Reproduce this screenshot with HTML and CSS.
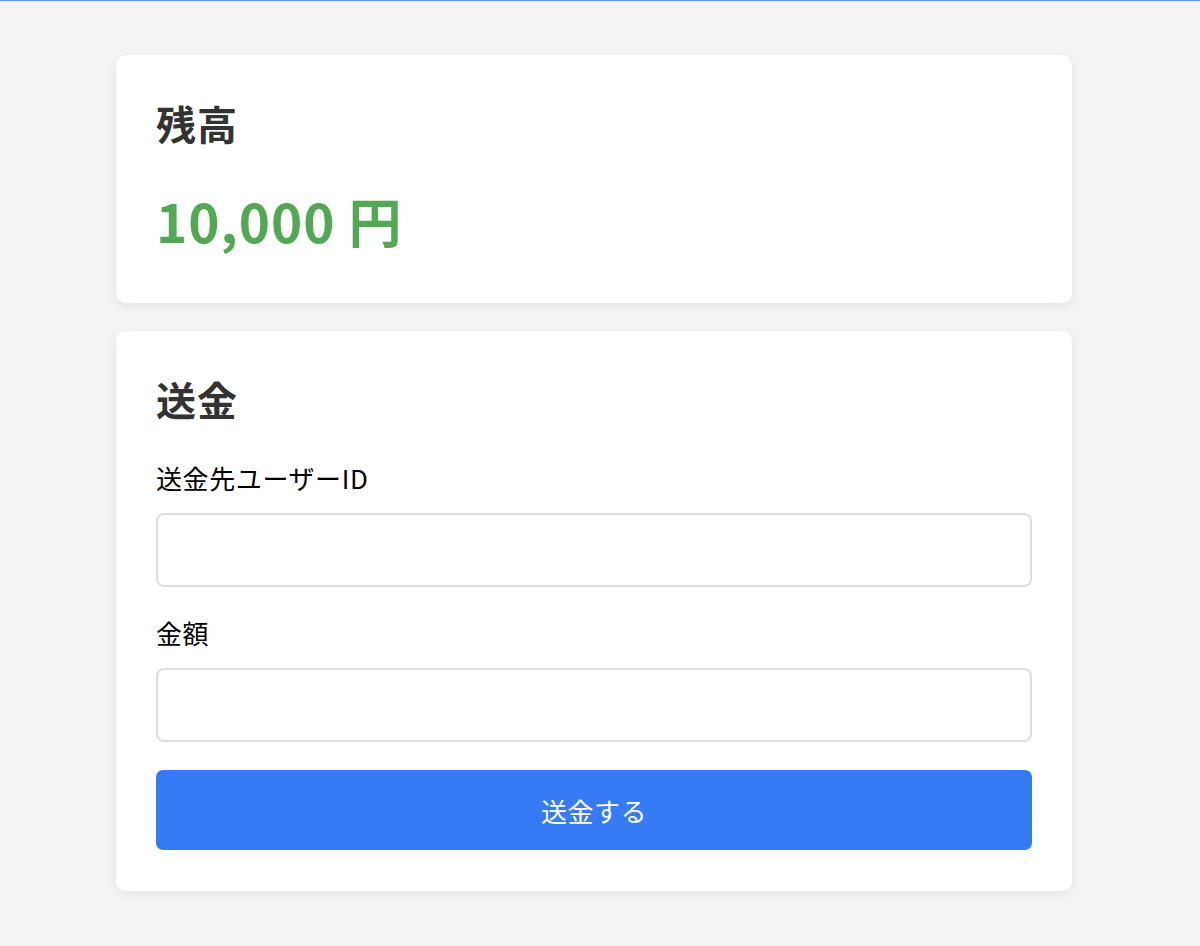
FILE: index.html
```html
<!DOCTYPE html>
<html lang="ja">
<head>
<meta charset="utf-8">
<title>送金</title>
<link rel="stylesheet" href="styles.css">
</head>
<body>
<div class="topline"></div>
<main class="container">
  <section class="card">
    <h2 class="card-title">残高</h2>
    <div class="balance">10,000 円</div>
  </section>
  <section class="card">
    <h2 class="card-title">送金</h2>
    <form class="form">
      <label class="label" for="to">送金先ユーザーID</label>
      <input class="input" id="to" type="text">
      <label class="label label-next" for="amount">金額</label>
      <input class="input" id="amount" type="number">
      <button class="button" type="button">送金する</button>
    </form>
  </section>
</main>
</body>
</html>
```
FILE: styles.css
```css
* { box-sizing: border-box; }
html, body { margin: 0; padding: 0; }
body {
  background: #f4f4f4;
  font-family: "Noto Sans CJK JP", "Noto Sans", sans-serif;
  color: #000;
  min-height: 946px;
}
.topline {
  height: 1px;
  background: #5b95f5;
}
.container {
  width: 956px;
  margin-left: 116px;
  padding-top: 54px;
  display: flex;
  flex-direction: column;
  gap: 28px;
}
.card {
  background: #fff;
  border-radius: 10px;
  box-shadow: 0 3px 12px rgba(0, 0, 0, 0.07);
  padding: 40px 40px 41px;
}
.card-title {
  margin: 0;
  padding-bottom: 4px;
  font-size: 40px;
  line-height: 56px;
  font-weight: 700;
  color: #333;
  letter-spacing: 1px;
}
.balance {
  margin-top: 28px;
  padding-bottom: 5px;
  font-size: 53px;
  line-height: 74px;
  font-weight: 700;
  color: #52a853;
  letter-spacing: 1px;
}
.form {
  display: flex;
  flex-direction: column;
  margin-top: 29px;
}
.label {
  font-size: 26px;
  line-height: 36px;
  padding-bottom: 4px;
  color: #000;
  letter-spacing: 0.6px;
}
.label-next { margin-top: 28px; }
.input {
  margin-top: 13px;
  height: 74px;
  border: 2px solid #dedede;
  border-radius: 8px;
  background: #fff;
  font-size: 26px;
  padding: 0 16px;
  font-family: inherit;
}
.button {
  margin-top: 28px;
  height: 80px;
  border: none;
  border-radius: 7px;
  background: #367bf5;
  color: #fff;
  font-family: inherit;
  font-size: 26px;
  letter-spacing: 0.5px;
  cursor: pointer;
}
```
